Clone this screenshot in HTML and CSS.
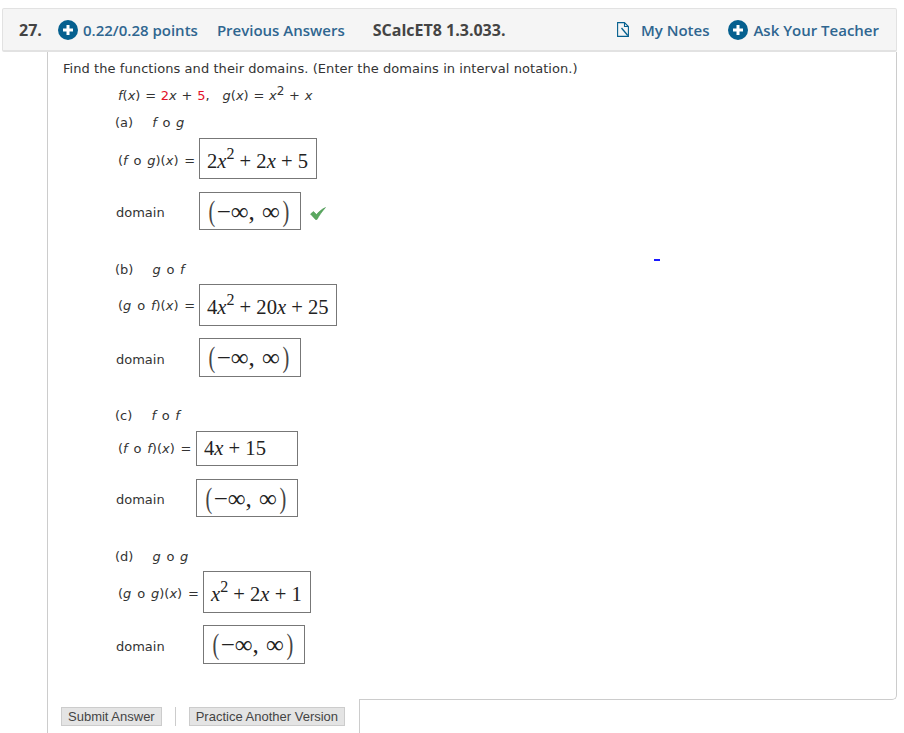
FILE: index.html
```html
<!DOCTYPE html>
<html lang="en">
<head>
<meta charset="utf-8">
<title>Question 27</title>
<link rel="stylesheet" href="styles.css">
</head>
<body>
<div class="question">
  <header class="head">
    <span class="num">27.</span>
    <svg class="plus" viewBox="0 0 20 20"><circle cx="10" cy="10" r="10" fill="#05608f"/><path d="M10 5v10M5 10h10" stroke="#fff" stroke-width="3"/></svg>
    <span class="link pts">0.22/0.28 points</span>
    <span class="link prev">Previous Answers</span>
    <span class="code">SCalcET8 1.3.033.</span>
    <span class="spacer"></span>
    <svg class="note" viewBox="0 0 12 15"><path d="M7.500 .6H.6V14.400H11.400V4.500L7.500 .6V4.500H11.400" fill="none" stroke="#05608f" stroke-width="1.100"/><path d="M4.500 6L10.800 13.500" stroke="#05608f" stroke-width="1.300"/></svg>
    <span class="link notes">My Notes</span>
    <svg class="plus" viewBox="0 0 20 20"><circle cx="10" cy="10" r="10" fill="#05608f"/><path d="M10 5v10M5 10h10" stroke="#fff" stroke-width="3"/></svg>
    <span class="link ask">Ask Your Teacher</span>
  </header>
  <main class="panel">
    <p class="intro">Find the functions and their domains. (Enter the domains in interval notation.)</p>
    <p class="given"><i>f</i>(<i>x</i>) = <b class="red">2</b><i>x</i> + <b class="red">5</b>,<span class="gap"></span><i>g</i>(<i>x</i>) = <i>x</i><sup>2</sup> + <i>x</i></p>

    <p class="part part-a">(a) <span class="op"><i>f</i> o <i>g</i></span></p>
    <div class="row eq-a">
      <span class="lbl lbl-a">(<i>f</i> o <i>g</i>)(<i>x</i>) =</span>
      <span class="box b-a"><span class="m">2<i>x</i><sup>2</sup> + 2<i>x</i> + 5</span></span>
    </div>
    <div class="row dom dom-a">
      <span class="dlabel dl-199">domain</span>
      <span class="box dbox"><span class="m"><span class="par">(</span><span class="inf">−∞,</span> <span class="inf">∞</span><span class="par par-end">)</span></span></span>
      <svg class="check" viewBox="0 0 16 13"><path d="M.5 7L3.500 4.500 6.500 7.500C9 4.500 12 2 15.500 .5 12 4.500 9.500 8 7 12.500L5.500 12.500z" fill="#5aa85f" stroke="#3f8f48" stroke-width=".5"/></svg>
    </div>

    <p class="part part-b">(b) <span class="op"><i>g</i> o <i>f</i></span></p>
    <div class="row eq-b">
      <span class="lbl lbl-b">(<i>g</i> o <i>f</i>)(<i>x</i>) =</span>
      <span class="box b-b"><span class="m">4<i>x</i><sup>2</sup> + 20<i>x</i> + 25</span></span>
    </div>
    <div class="row dom dom-b">
      <span class="dlabel dl-199">domain</span>
      <span class="box dbox"><span class="m"><span class="par">(</span><span class="inf">−∞,</span> <span class="inf">∞</span><span class="par par-end">)</span></span></span>
    </div>

    <p class="part part-c">(c) <span class="op"><i>f</i> o <i>f</i></span></p>
    <div class="row eq-c">
      <span class="lbl lbl-c">(<i>f</i> o <i>f</i>)(<i>x</i>) =</span>
      <span class="box b-c"><span class="m">4<i>x</i> + 15</span></span>
    </div>
    <div class="row dom dom-c">
      <span class="dlabel dl-196">domain</span>
      <span class="box dbox"><span class="m"><span class="par">(</span><span class="inf">−∞,</span> <span class="inf">∞</span><span class="par par-end">)</span></span></span>
    </div>

    <p class="part part-d">(d) <span class="op"><i>g</i> o <i>g</i></span></p>
    <div class="row eq-d">
      <span class="lbl lbl-d">(<i>g</i> o <i>g</i>)(<i>x</i>) =</span>
      <span class="box b-d"><span class="m"><i>x</i><sup>2</sup> + 2<i>x</i> + 1</span></span>
    </div>
    <div class="row dom dom-d">
      <span class="dlabel dl-203">domain</span>
      <span class="box dbox"><span class="m"><span class="par">(</span><span class="inf">−∞,</span> <span class="inf">∞</span><span class="par par-end">)</span></span></span>
    </div>
  </main>
  <footer class="foot">
    <button class="btn">Submit Answer</button>
    <span class="sep"></span>
    <button class="btn">Practice Another Version</button>
  </footer>
</div>
<span class="dash"></span>
</body>
</html>
```
FILE: styles.css
```css
html, body { margin: 0; padding: 0; background: #fff; }
body { height: 733px; overflow: hidden; font-family: "DejaVu Sans", sans-serif; font-size: 13px; color: #333; }
p { margin: 0; }
.question { margin: 8px 7px 0 2px; }
.head { display: flex; align-items: center; height: 41px; padding-left: 16px; padding-right: 17px; background: #f5f5f5; border: 2px solid #e2e2e2; border-width: 1px 1px 2px 1px; border-radius: 2px; font-family: "Open Sans", sans-serif; font-size: 15px; font-weight: 600; white-space: nowrap; }
.num { font-size: 16px; font-weight: 700; color: #444; width: 39px; }
.plus { width: 20px; height: 20px; flex: none; }
.link { color: #2f6690; }
.pts { margin-left: 5px; }
.prev { margin-left: 19px; }
.code { margin-left: 28px; color: #444; font-weight: 700; font-size: 16px; }
.spacer { flex: 1; }
.note { width: 12px; height: 15px; margin-right: 12px; }
.notes { margin-right: 19px; }
.ask { margin-left: 5px; }
.panel { position: relative; margin-left: 45px; height: 648px; box-sizing: border-box; border: 1px solid #ccc; border-top: 0; border-bottom-right-radius: 5px; padding-left: 15px; }
.panel i { font-style: italic; }
.intro { padding-top: 9px; line-height: 16px; letter-spacing: .07px; white-space: nowrap; }
.given { margin-left: 55px; margin-top: 11px; line-height: 16px; word-spacing: .6px; }
.given sup { font-size: 12px; line-height: 0; }
.gap { display: inline-block; width: 13px; }
.red { color: #e3102a; font-weight: 400; }
.part { margin-left: 52px; line-height: 16px; }
.op { margin-left: 15px; word-spacing: 1.5px; }
.part-a { margin-top: 11px; }
.part-b { margin-top: 32px; }
.part-c { margin-top: 31px; }
.part-d { margin-top: 32px; }
.row { display: flex; align-items: center; }
.eq-a { margin-top: 7px; }
.eq-b { margin-top: 6px; }
.eq-c { margin-top: 7px; }
.eq-d { margin-top: 6px; }
.lbl { margin-left: 55px; white-space: nowrap; word-spacing: 1.7px; }
.lbl-a, .lbl-b { width: 81px; }
.lbl-a { padding-top: 4px; }
.lbl-d { padding-top: 2px; }
.lbl-c { width: 78px; }
.lbl-d { width: 85px; }
.box { box-sizing: border-box; display: flex; align-items: center; background: #fff; border: 1px solid #777; padding-left: 7px; font-family: "Liberation Serif", serif; font-size: 20.6px; color: #222; white-space: nowrap; }
.m sup { font-size: 16px; line-height: 0; vertical-align: 9px; }
.b-a { width: 118px; height: 41px; padding-top: 5px; }
.b-b { width: 138px; height: 42px; padding-top: 5px; }
.b-c { width: 102px; height: 35px; }
.b-d { width: 108px; height: 42px; padding-top: 5px; }
.dbox { width: 102px; height: 38px; }
.dbox .m { word-spacing: 2px; }
.par { display: inline-block; font-size: 29px; line-height: 1; vertical-align: -1px; color: #444; transform: scaleX(.7); }
.par-end { margin-left: 1px; }
.inf { font-size: 25px; line-height: 0; }
.dom { margin-top: 13px; }
.dom-b { margin-top: 12px; height: 39px; }
.dom-b .dbox { height: 39px; }
.dom-b .dlabel, .dom-d .dlabel { padding-top: 4px; }
.dom-d { margin-top: 12px; }
.dom-d .dbox { height: 39px; }
.dlabel { margin-left: 53px; padding-top: 2px; }
.dl-199 { width: 83px; }
.dl-196 { width: 80px; }
.dl-203 { width: 87px; }
.check { width: 16px; height: 13px; margin-left: 9px; margin-top: 5px; }
.foot { position: relative; display: flex; align-items: center; box-sizing: border-box; width: 313px; height: 34px; margin-top: -1px; margin-left: 45px; padding-left: 13px; background: #fff; border-left: 1px solid #ccc; border-right: 1px solid #ccc; }
.btn { box-sizing: border-box; height: 19px; padding: 0 6px; margin: 1px 0 0; background: #e4e4e4; border: 1px solid #ccc; border-radius: 0; font-family: "Liberation Sans", sans-serif; font-size: 13px; line-height: 15px; color: #444; white-space: nowrap; }
.sep { width: 1px; height: 19px; margin: 1px 13px 0 13px; background: #ccc; }
.dash { position: absolute; left: 654px; top: 259px; width: 6px; height: 2px; background: #1a1aff; }
```
